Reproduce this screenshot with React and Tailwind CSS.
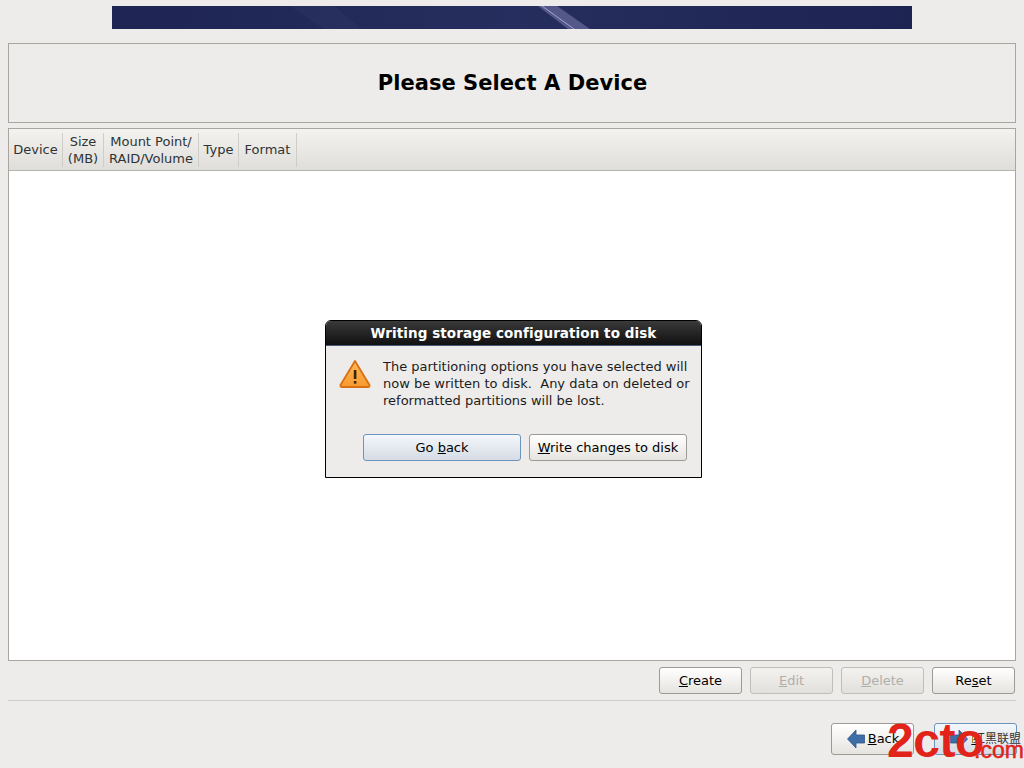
import React from "react";

const font = { dejavu: "font-['DejaVu_Sans',sans-serif]" };

function Btn({ children, disabled, focus, className = "" }) {
  let tone = "border-[#9c9a94] bg-gradient-to-b from-white to-[#e6e4e0] text-black";
  if (disabled) tone = "border-[#c0beb9] bg-gradient-to-b from-[#f3f2f0] to-[#e2e0dc] text-[#b0aeaa]";
  if (focus) tone = "border-[#6d94bd] bg-gradient-to-b from-[#f4f7fb] to-[#d5dce5] text-black";
  return (
    <button className={`flex items-center justify-center rounded-[3px] border pb-[1px] text-[13px] leading-none ${tone} ${className}`}>
      {children}
    </button>
  );
}

function Col({ w, children }) {
  return (
    <div className={`flex h-[34px] shrink-0 items-center justify-center border-r border-[#cfcdc8] text-center text-[13px] leading-[17px] text-[#2e3436] ${w}`}>
      <div>{children}</div>
    </div>
  );
}

function Banner() {
  return (
    <div className="relative h-[23px] w-[800px] overflow-hidden bg-gradient-to-r from-[#1e2553] via-[#252e5e] to-[#1e2452]">
      <svg className="absolute left-0 top-0" width="800" height="23" viewBox="0 0 800 23">
        <polygon points="178,0 222,0 250,23 212,23" fill="#2b3463" opacity="0.5" />
        <polygon points="426,0 445,0 478,23 456,23" fill="#6a6a9e" opacity="0.7" />
        <line x1="430" y1="0" x2="462" y2="23" stroke="#a5a5c8" strokeWidth="1" />
      </svg>
    </div>
  );
}

function WarningIcon() {
  return (
    <svg width="32" height="30" viewBox="0 0 32 30">
      <defs>
        <linearGradient id="warn" x1="0" y1="0" x2="0" y2="1">
          <stop offset="0" stopColor="#fcb85a" />
          <stop offset="1" stopColor="#f99a2e" />
        </linearGradient>
      </defs>
      <path d="M16 2 L30.5 26 Q31 28 29 28 L3 28 Q1 28 1.5 26 Z" fill="url(#warn)" stroke="#d96f10" strokeWidth="1.8" strokeLinejoin="round" />
      <rect x="14.8" y="11" width="2.6" height="9" fill="#3a2504" />
      <rect x="14.8" y="22" width="2.6" height="2.6" fill="#3a2504" />
    </svg>
  );
}

function BackArrow() {
  return (
    <svg width="18" height="20" viewBox="0 0 18 20">
      <path d="M9 1 L0.5 10 L9 19 L9 14 L17.5 14 L17.5 6 L9 6 Z" fill="#3e6fa8" stroke="#2d5688" strokeWidth="0.8" />
    </svg>
  );
}

function NextArrow() {
  return (
    <svg width="18" height="20" viewBox="0 0 18 20">
      <path d="M9 1 L17.5 10 L9 19 L9 14 L0.5 14 L0.5 6 L9 6 Z" fill="#3e6fa8" stroke="#2d5688" strokeWidth="0.8" />
    </svg>
  );
}

export default function App() {
  return (
    <div className={`relative flex h-[768px] w-[1024px] flex-col overflow-hidden bg-[#edecea] ${font.dejavu}`}>
      <div className="flex justify-center pt-[6px]">
        <Banner />
      </div>

      <div className="mx-[8px] mt-[14px] flex h-[80px] items-center justify-center border border-[#a8a69f] pl-[1px] pt-[2px]">
        <h1 className="text-[21px] font-bold tracking-[0.05px] text-black">Please Select A Device</h1>
      </div>

      <div className="mx-[8px] mt-[5px] h-[533px] border border-[#a8a69f] bg-white">
        <div className="flex h-[42px] items-center border-b border-[#b5b3ad] bg-gradient-to-b from-[#f3f2f0] to-[#e0ded9]">
          <Col w="w-[54px]">Device</Col>
          <Col w="w-[41px]">
            Size
            <br />
            (MB)
          </Col>
          <Col w="w-[95px]">
            Mount Point/
            <br />
            RAID/Volume
          </Col>
          <Col w="w-[40px]">Type</Col>
          <Col w="w-[58px]">Format</Col>
        </div>
      </div>

      <div className="mx-[8px] mt-[6px] flex justify-end gap-[8px] pr-px">
        <Btn className="h-[27px] w-[83px]">
          <span><u>C</u>reate</span>
        </Btn>
        <Btn disabled className="h-[27px] w-[83px]">
          <span><u>E</u>dit</span>
        </Btn>
        <Btn disabled className="h-[27px] w-[83px]">
          <span><u>D</u>elete</span>
        </Btn>
        <Btn className="h-[27px] w-[83px]">
          <span>Re<u>s</u>et</span>
        </Btn>
      </div>

      <div className="mx-[8px] mt-[6px] border-t border-[#cfcdc8]" />

      <div className="mr-[7px] mt-[22px] flex justify-end gap-[20px]">
        <Btn className="h-[32px] w-[83px] gap-[3px] pl-[1px]">
          <BackArrow />
          <span><u>B</u>ack</span>
        </Btn>
        <Btn focus className="h-[32px] w-[83px] gap-[3px] pl-[1px]">
          <NextArrow />
          <span><u>N</u>ext</span>
        </Btn>
      </div>

      {/* modal dialog */}
      <div className="absolute left-[325px] top-[320px] h-[158px] w-[377px] overflow-hidden rounded-t-[6px] border border-black bg-[#edecea]">
        <div className="flex h-[25px] items-center justify-center border-b border-[#4a5a78] bg-gradient-to-b from-[#3a3a3a] to-[#111111] text-[13.5px] font-bold tracking-[0.08px] text-white">
          Writing storage configuration to disk
        </div>
        <div className="flex pl-[13px] pr-[6px] pt-[12px]">
          <div className="mr-[12px] mt-[1px] shrink-0">
            <WarningIcon />
          </div>
          <p className="whitespace-pre text-[13px] leading-[17px] text-[#1c1c1c]">
            {"The partitioning options you have selected will\nnow be written to disk.  Any data on deleted or\nreformatted partitions will be lost."}
          </p>
        </div>
        <div className="mt-[25px] flex justify-end gap-[8px] pr-[14px]">
          <Btn focus className="h-[27px] w-[158px]">
            <span>Go <u>b</u>ack</span>
          </Btn>
          <Btn className="h-[27px] w-[158px]">
            <span><u>W</u>rite changes to disk</span>
          </Btn>
        </div>
      </div>

      {/* site watermark */}
      <div className="absolute left-[885px] top-[722px] h-[46px] w-[139px] leading-none">
        <span className="absolute left-[88px] top-[10px] bg-[#e9edf2] font-['Noto_Sans_CJK_SC',sans-serif] text-[12px] text-[#333333]">红黑联盟</span>
        <span className="absolute left-[2px] top-[-5px] font-['Liberation_Sans',sans-serif] text-[48px] font-bold tracking-[-0.5px] text-[#e2231a]">2cto</span>
        <span className="absolute left-[89px] top-[17px] font-['Liberation_Sans',sans-serif] text-[23px] text-[#e2231a] [-webkit-text-stroke:0.5px_#e2231a]">.com</span>
      </div>
    </div>
  );
}
